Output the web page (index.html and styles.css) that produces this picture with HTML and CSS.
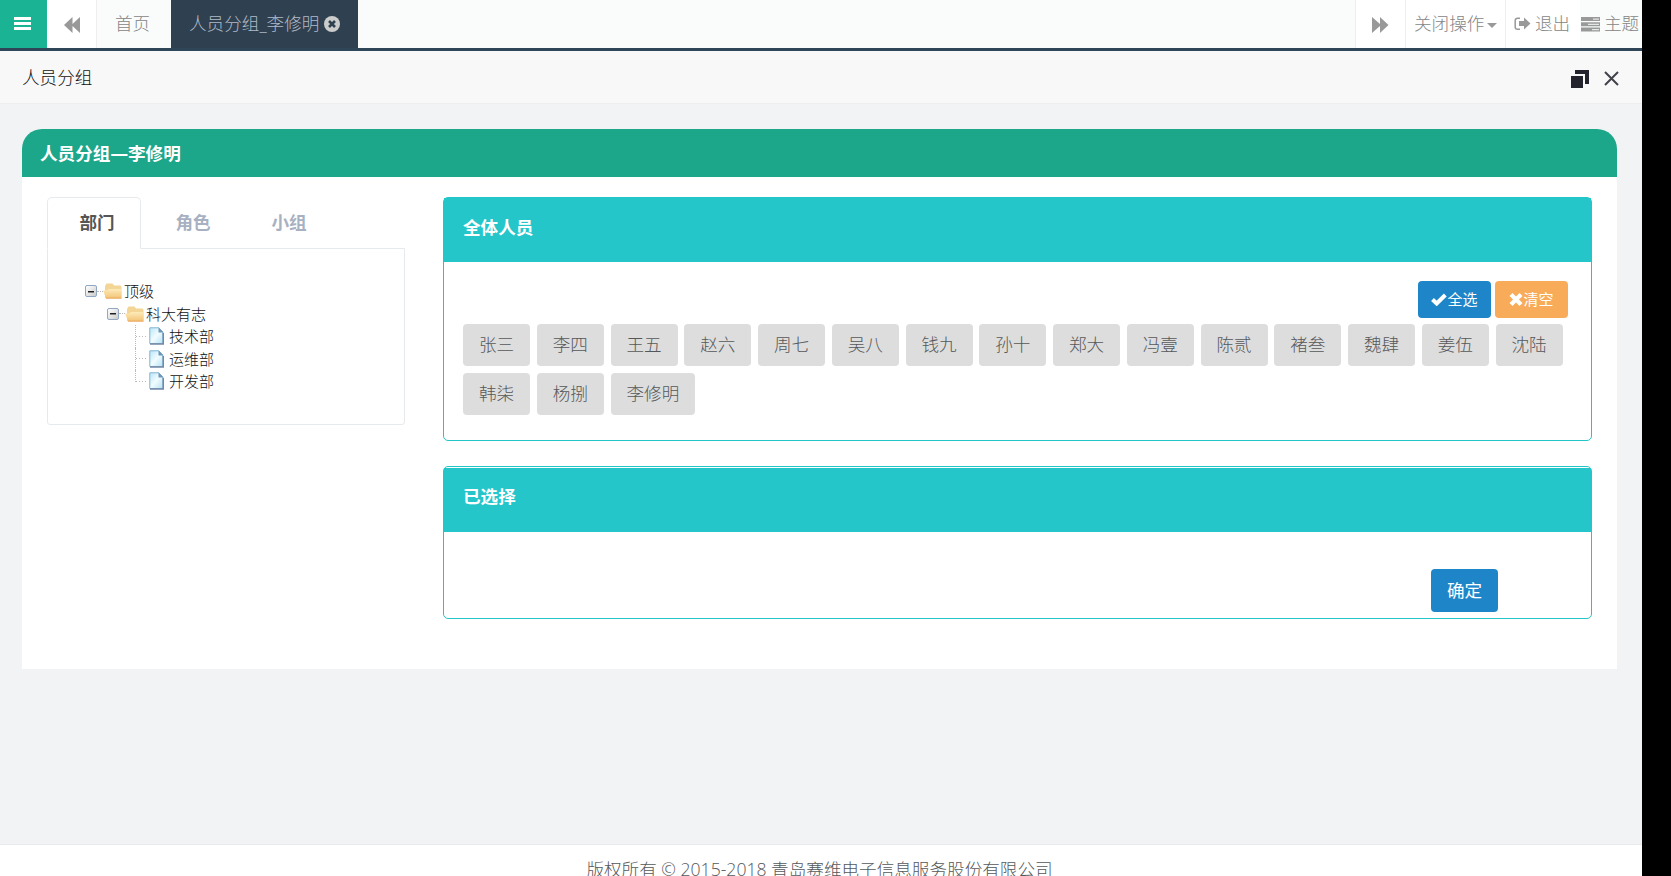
FILE: index.html
```html
<!DOCTYPE html>
<html lang="zh-CN">
<head>
<meta charset="utf-8">
<title>人员分组</title>
<link rel="stylesheet" href="styles.css">
</head>
<body>
<div class="app">
  <header class="topbar">
    <a class="menu-toggle"><svg width="17" height="14" viewBox="0 0 17 14"><path fill="#fff" d="M0 0h17v3H0zM0 5h17v3H0zM0 10h17v3H0z"/></svg></a>
    <a class="roll roll-left"><svg width="17" height="16" viewBox="0 0 17 16"><path fill="#999" d="M8.500 0v7L16 0v16L8.500 9v7L0 8z"/></svg></a>
    <nav class="page-tabs">
      <a class="page-tab"><span>首页</span></a>
      <a class="page-tab active"><span>人员分组_李修明</span><svg class="tab-close" width="16" height="16" viewBox="0 0 16 16"><circle cx="8" cy="8" r="8" fill="#ccc"/><path d="M5 5l6 6M11 5l-6 6" stroke="#2f4050" stroke-width="2.600"/></svg></a>
    </nav>
    <a class="roll roll-right"><svg width="17" height="16" viewBox="0 0 17 16"><path fill="#999" d="M0 0l8 7V0l8.500 8L8 16V9l-8 7z"/></svg></a>
    <a class="close-menu"><span>关闭操作</span><i class="caret"></i></a>
    <a class="logout"><svg width="17" height="14" viewBox="0 0 17 14"><path d="M6 1.200H3.500A2.300 2.300 0 0 0 1.200 3.500v6.500a2.300 2.300 0 0 0 2.300 2.300H6" fill="none" stroke="#999" stroke-width="1.500"/><path fill="#999" d="M5 4h5V.5l6.500 6L10 12.500V9H5z"/></svg><span>退出</span></a>
    <a class="theme"><svg width="19" height="15" viewBox="0 0 19 15"><path fill="#999" d="M0 0h19v4H0zM0 5.300h19v4H0zM0 10.600h19v4H0z"/><path fill="#e4e6e5" d="M12 1.400h6v1.300h-6zM7 6.700h11V8H7zM11 12h7v1.300h-7z"/></svg><span>主题</span></a>
  </header>

  <div class="page-heading">
    <span>人员分组</span>
    <div class="window-tools">
      <svg width="18" height="18" viewBox="0 0 18 18"><path fill="#23232e" d="M0 6h12v12H0zM4 0h14v14h-4V4H4z"/></svg>
      <svg width="15" height="15" viewBox="0 0 15 15"><path d="M1 1l13 13M14 1L1 14" stroke="#42424b" stroke-width="2"/></svg>
    </div>
  </div>

  <main class="content">
    <section class="panel">
      <h1 class="panel-title">人员分组—李修明</h1>
      <div class="panel-body">
        <aside class="side">
          <div class="tabs"><a class="tab active">部门</a><a class="tab">角色</a><a class="tab">小组</a></div>
          <div class="tree-box">
            <ul class="tree">
              <li class="node"><i class="switch"></i><i class="dots"></i><svg class="folder" viewBox="0 0 19 16"><use href="#folder"/></svg>顶级</li>
              <li class="node level-2"><i class="switch"></i><i class="dots"></i><svg class="folder" viewBox="0 0 19 16"><use href="#folder"/></svg>科大有志</li>
              <li class="node level-3"><i class="branch"></i><svg class="file" viewBox="0 0 15 18"><use href="#file"/></svg>技术部</li>
              <li class="node level-3"><i class="branch"></i><svg class="file" viewBox="0 0 15 18"><use href="#file"/></svg>运维部</li>
              <li class="node level-3 last"><i class="branch"></i><svg class="file" viewBox="0 0 15 18"><use href="#file"/></svg>开发部</li>
            </ul>
          </div>
        </aside>
        <div class="main">
          <section class="card all">
            <h2 class="card-title">全体人员</h2>
            <div class="actions">
              <button class="btn small primary"><svg width="16" height="13" viewBox="0 0 16 13"><path d="M1.500 6.500l4.200 4L14.300 2" fill="none" stroke="#fff" stroke-width="4"/></svg>全选</button>
              <button class="btn small warning"><svg width="14" height="13" viewBox="0 0 14 13"><path d="M2 1.500l10 10M12 1.500l-10 10" stroke="#fff" stroke-width="4.200"/></svg>清空</button>
            </div>
            <div class="tags">
              <span class="tag">张三</span><span class="tag">李四</span><span class="tag">王五</span><span class="tag">赵六</span><span class="tag">周七</span><span class="tag">吴八</span><span class="tag">钱九</span><span class="tag">孙十</span><span class="tag">郑大</span><span class="tag">冯壹</span><span class="tag">陈贰</span><span class="tag">褚叁</span><span class="tag">魏肆</span><span class="tag">姜伍</span><span class="tag">沈陆</span><span class="tag">韩柒</span><span class="tag">杨捌</span><span class="tag">李修明</span>
            </div>
          </section>
          <section class="card chosen">
            <h2 class="card-title">已选择</h2>
            <div class="confirm"><button class="btn primary">确定</button></div>
          </section>
        </div>
      </div>
    </section>
  </main>
  <footer class="footer">版权所有 © 2015-2018 青岛赛维电子信息服务股份有限公司</footer>
</div>
<svg class="defs" width="0" height="0">
  <defs>
    <linearGradient id="gold" x1="0" y1="0" x2="0" y2="1"><stop offset="0" stop-color="#fdebb8"/><stop offset="1" stop-color="#f3c479"/></linearGradient>
    <linearGradient id="paper" x1="0" y1="0" x2="1" y2="1"><stop offset="0" stop-color="#b9e6f8"/><stop offset=".5" stop-color="#f2fcff"/><stop offset="1" stop-color="#b4e2f4"/></linearGradient>
    <g id="folder"><path fill="#f3d696" d="M2 7V3l1.500-2.500h6L11 2.500h6.500L18.500 4v11H2z"/><path fill="url(#gold)" d="M0 7.500h4L6 6h12.500v9H3z"/><path d="M3 15.200h15.500" stroke="#e9a352"/></g>
    <g id="file"><path fill="url(#paper)" stroke="#82b4d2" d="M.8.800h9l4 4V16.500H.8z"/><path fill="#6f95b8" d="M9.500.500v5h5z"/><path d="M1 17h13.300V6" fill="none" stroke="#7488a6" stroke-width="1.400"/></g>
  </defs>
</svg>
</body>
</html>
```
FILE: styles.css
```css
* { box-sizing: border-box; }
body {
  margin: 0;
  height: 876px;
  overflow: hidden;
  background: #000;
  color: #55585a;
  font: 300 17.6px/24px "Open Sans", "Noto Sans CJK SC", sans-serif;
}
.app { display: flex; flex-direction: column; width: 1642px; height: 876px; background: #f1f3f5; overflow: hidden; }
svg { flex: none; }
.defs { position: absolute; }

.topbar { display: flex; flex: none; height: 51px; background: #f9fcfb; border-bottom: 3px solid #2f4558; color: #858585; }
.topbar a { display: flex; align-items: center; flex: none; white-space: nowrap; }
.topbar span { padding-bottom: 2px; }
.menu-toggle { width: 47px; padding-left: 14px; background: #1ab394; }
.roll { width: 50px; background: #fff; }
.roll-left { padding: 1px 0 0 17px; border-right: 1px solid #eee; }
.roll-right { width: 51px; padding: 1px 0 0 16px; border-left: 1px solid #eee; border-right: 1px solid #eee; }
.page-tabs { display: flex; flex: 1; }
.page-tab { width: 74px; padding-left: 18px; }
.page-tab.active { width: 187px; background: #2f4050; color: #b0bac9; }
.tab-close { margin-left: 5px; }
.close-menu { width: 100px; padding-left: 8px; background: #fff; border-right: 1px solid #eee; }
.caret { margin: 3px 0 0 3px; border: 5px solid transparent; border-top-color: #999; border-bottom: 0; }
.logout { width: 74px; padding-left: 8px; gap: 4px; background: #fff; }
.theme { width: 62px; padding-left: 1px; gap: 4px; }

.page-heading { display: flex; flex: none; align-items: center; justify-content: space-between; height: 53px; padding: 0 23px 0 22px; background: #f8f8f8; border-bottom: 1px solid #eee; color: #111; }
.window-tools { display: flex; align-items: center; gap: 15px; padding-top: 3px; }

.content { flex: 1; padding: 25px 25px 0 22px; }
.panel { height: 540px; background: #fff; border-radius: 20px 20px 0 0; }
.panel-title { height: 48px; margin: 0; padding-left: 18px; background: #1ca68a; border-radius: 20px 20px 0 0; color: #fff; font-size: 17.600px; line-height: 48px; font-weight: 700; }
.panel-body { display: flex; gap: 38px; padding: 20px 25px 0; }
.side { width: 358px; }
.tabs { display: flex; gap: 2px; height: 52px; margin-bottom: -1px; }
.tab { width: 94px; height: 52px; border: 1px solid transparent; color: #a7b1c2; font-weight: 700; line-height: 49px; text-align: center; padding-left: 6px; }
.tab.active { z-index: 1; background: #fff; border-color: #e7eaec; border-bottom-color: #fff; border-radius: 5px 5px 0 0; color: #555; }
.tree-box { height: 177px; padding: 31px 0 0 37px; border: 1px solid #e7eaec; border-radius: 0 0 3px 3px; }
.tree { margin: 0; padding: 0; list-style: none; color: #111; font-size: 15px; }
.node { display: flex; align-items: center; height: 22.500px; white-space: nowrap; }
.level-2 { padding-left: 22px; }
.level-3 { padding-left: 50px; }
.switch { width: 12px; height: 12px; border: 1px solid #92a7c2; border-radius: 2px; background: linear-gradient(#222, #222) center / 6px 1.500px no-repeat, linear-gradient(135deg, #fff, #ccc); }
.dots { width: 6px; border-top: 1px dotted #bbb; }
.folder { width: 19px; height: 16px; margin-right: 2px; }
.file { width: 15px; height: 18px; margin: 0 5px 0 3px; }
.branch { align-self: stretch; width: 11px; border-left: 1px dotted #bbb; background: repeating-linear-gradient(90deg, #bbb 0 1px, transparent 1px 3px) 0 50% / 100% 1px no-repeat; }
.last .branch { align-self: flex-start; height: 12px; background-position: 0 100%; }

.main { width: 1149px; }
.card { border: 1px solid #23c6c8; border-radius: 5px; background: #fff; }
.card-title { height: 64px; margin: 0; padding: 17px 0 0 19px; background: #25c6ca; color: #fff; font-size: 17.600px; line-height: 24px; font-weight: 700; }
.all { height: 244px; margin-bottom: 25px; }
.chosen { height: 153px; padding-top: 1px; }
.chosen .card-title { padding-top: 16px; }
.actions { display: flex; justify-content: flex-end; gap: 4px; padding: 19px 23px 6px 0; }
.btn { width: 67px; height: 43px; padding: 0; border: 0; border-radius: 4px; color: #fff; font: 400 17.600px/43px "Open Sans", "Noto Sans CJK SC", sans-serif; }
.btn.small { display: flex; align-items: center; justify-content: center; width: 73px; height: 37px; font-size: 15px; line-height: 37px; }
.primary { background: #1e86c8; }
.warning { background: #f8ac59; }
.tags { display: flex; flex-wrap: wrap; gap: 7px 6.550px; padding: 0 20px 0 19px; }
.tag { height: 42px; padding: 0 16px; border-radius: 4px; background: #ddd; line-height: 41px; white-space: nowrap; }
.confirm { display: flex; justify-content: flex-end; padding: 37px 93px 0 0; }

.footer { flex: none; height: 32px; padding: 12px 3px 0 0; border-top: 1px solid #e7eaec; background: #fff; text-align: center; white-space: nowrap; }
```
